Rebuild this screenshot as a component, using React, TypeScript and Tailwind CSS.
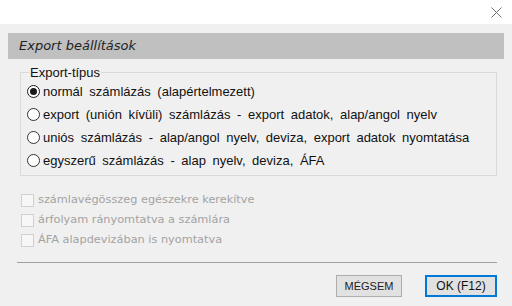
import { useState } from "react"

const options = [
    "normál számlázás (alapértelmezett)",
    "export (unión kívüli) számlázás - export adatok, alap/angol nyelv",
    "uniós számlázás - alap/angol nyelv, deviza, export adatok nyomtatása",
    "egyszerű számlázás - alap nyelv, deviza, ÁFA",
]

const checks = [
    "számlavégösszeg egészekre kerekítve",
    "árfolyam rányomtatva a számlára",
    "ÁFA alapdevizában is nyomtatva",
]

export default function App() {
    const [selected, setSelected] = useState(0)

    return (
        <div className="w-[512px] h-[306px] bg-[#f0f0f0] flex flex-col overflow-hidden font-['Liberation_Sans',Arial,sans-serif] text-[13px] text-black">
            {/* title bar */}
            <div className="h-[24px] bg-white flex items-center justify-end pr-[10px]">
                <svg width="11" height="11" viewBox="0 0 11 11" className="text-[#6f6f6f]">
                    <path d="M0.5 0.5L10.5 10.5M10.5 0.5L0.5 10.5" stroke="currentColor" strokeWidth="1" />
                </svg>
            </div>

            <div className="flex flex-col px-[8px] pt-[9px]">
                {/* header */}
                <div className="h-[26px] bg-[#c0c0c0] flex items-center pl-[11px] italic text-[13px] text-[#222] font-['DejaVu_Sans',Verdana,sans-serif]">
                    Export beállítások
                </div>

                {/* export type group */}
                <fieldset className="mt-[6px] ml-[12px] w-[477px] border border-[#d9d9d9] pl-[6px] pr-[6px] pb-[3px] pt-0">
                    <legend className="ml-[2px] px-[1px] leading-[15px] text-[13px] text-[#111]">Export-típus</legend>
                    {options.map((label, i) => (
                        <label
                            key={i}
                            onClick={() => setSelected(i)}
                            className="h-[23px] flex items-center gap-[3px] cursor-default"
                        >
                            <span className={`w-[13px] h-[13px] rounded-full border flex items-center justify-center bg-white ${selected === i ? "border-[#1a1a1a]" : "border-[#333]"}`}>
                                {selected === i && <span className="w-[7px] h-[7px] rounded-full bg-[#1a1a1a]" />}
                            </span>
                            <span className="text-[13px] text-[#111] [word-spacing:3px]">{label}</span>
                        </label>
                    ))}
                </fieldset>

                {/* disabled checkboxes */}
                <div className="mt-[14px] ml-[13px] flex flex-col">
                    {checks.map((label) => (
                        <div key={label} className="h-[20px] flex items-center gap-[4px]">
                            <span className="w-[13px] h-[13px] border border-[#cfcfcf] bg-[#f7f7f7]" />
                            <span className="text-[11.3px] text-[#a3a3a3] font-['DejaVu_Sans',Verdana,sans-serif]">{label}</span>
                        </div>
                    ))}
                </div>

                <div className="mt-[12px] ml-[9px] w-[480px] h-px bg-[#a0a0a0]" />

                {/* buttons */}
                <div className="mt-[12px] flex justify-end gap-[23px] pr-[7px]">
                    <button className="w-[66px] h-[22px] bg-[#e1e1e1] border border-[#adadad] text-[11px] text-[#222]">
                        MÉGSEM
                    </button>
                    <button className="w-[72px] h-[22px] bg-[#e1e1e1] border-2 border-[#0078d7] text-[12px] text-[#111]">
                        OK (F12)
                    </button>
                </div>
            </div>
        </div>
    )
}
